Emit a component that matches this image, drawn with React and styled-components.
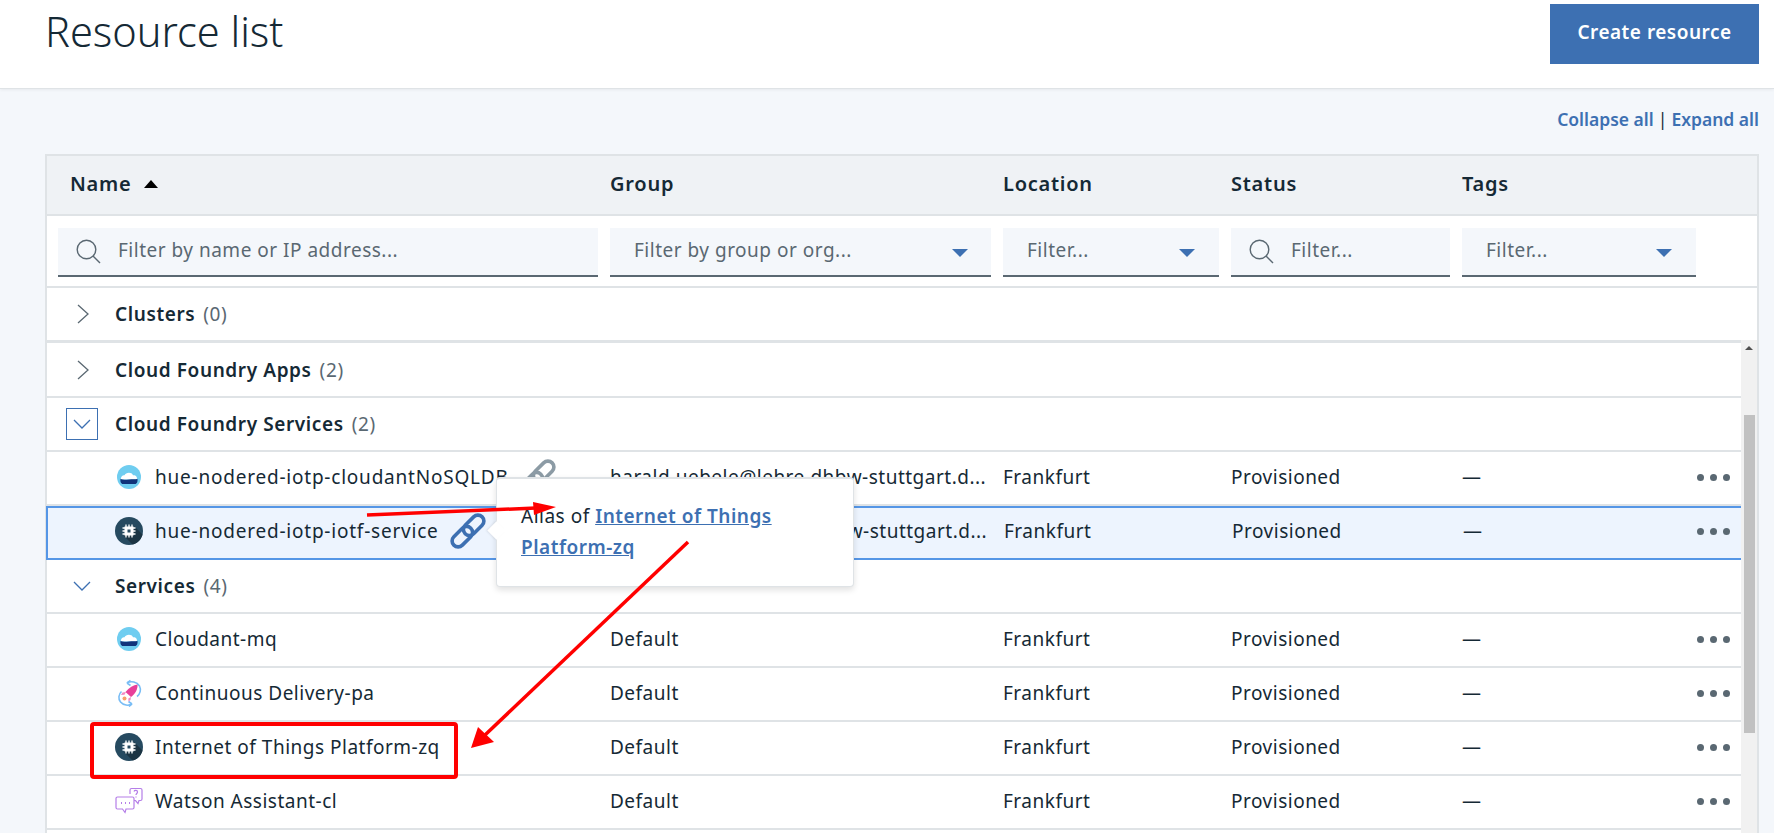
import React from "react";
import styled, { createGlobalStyle } from "styled-components";

const Global = createGlobalStyle`
  html, body { margin: 0; padding: 0; height: 833px; overflow: hidden; background: #f4f7fb; }
  * { box-sizing: border-box; }
  body { font-family: "Noto Sans", "Liberation Sans", sans-serif; color: #152935; }
`;

const FONT_SPACING = "0.5px";
const COLUMNS = "563px 393px 228px 231px 1fr";

const Page = styled.div`
  position: relative;
  height: 833px;
  overflow: hidden;
`;
const TopBar = styled.header`
  height: 89px;
  background: #fff;
  border-bottom: 1px solid #dfe3e6;
  box-shadow: 0 1px 3px rgba(0,0,0,.06);
  display: flex;
  justify-content: space-between;
  align-items: flex-start;
  padding: 4px 15px 0 45px;
`;
const Title = styled.h1`
  margin: 0;
  font-family: "Noto Sans", sans-serif;
  font-weight: 300;
  font-size: 41.5px;
  line-height: 54px;
  letter-spacing: 0;
`;
const PrimaryButton = styled.button`
  width: 209px;
  height: 60px;
  border: 0;
  padding: 0 0 5px;
  background: #3d70b2;
  color: #fff;
  font: 600 19px "Noto Sans", sans-serif;
  letter-spacing: 0.5px;
`;
const Main = styled.main`
  padding: 0 15px 0 45px;
`;
const ExpandLinks = styled.div`
  height: 65px;
  display: flex;
  justify-content: flex-end;
  align-items: center;
  gap: 4px;
  padding-bottom: 6px;
  font-size: 17.5px;
  color: #152935;
`;
const TextLink = styled.a`
  color: #3d70b2;
  font-weight: 600;
`;
const Table = styled.section`
  border: 2px solid #dfe3e6;
  border-bottom: 0;
  background: #fff;
`;
const HeaderRow = styled.div`
  display: grid;
  grid-template-columns: ${COLUMNS};
  height: 60px;
  align-items: center;
  padding-bottom: 3px;
  background: #eff2f5;
  border-bottom: 2px solid #dfe3e6;
  font-size: 20px;
  letter-spacing: 0.75px;
  font-weight: 600;
`;
const HeaderCell = styled.div`
  display: flex;
  align-items: center;
  gap: 13px;
  padding-left: ${p => p.$first ? "23px" : "0"};
`;
const SortCaret = styled.span`
  width: 0;
  height: 0;
  border-left: 7.5px solid transparent;
  border-right: 7.5px solid transparent;
  border-bottom: 8px solid #000;
`;
const FilterRow = styled.div`
  display: grid;
  grid-template-columns: ${COLUMNS};
  height: 72px;
  align-items: start;
  padding-top: 12px;
  border-bottom: 2px solid #dfe3e6;
`;
const FilterCell = styled.div`
  padding-left: ${p => p.$first ? "11px" : "0"};
  padding-right: ${p => p.$pad}px;
`;
const FilterBox = styled.div`
  height: 49px;
  background: #f4f7fb;
  border-bottom: 2px solid #5a6872;
  display: flex;
  align-items: center;
  justify-content: space-between;
  padding: 0 ${p => p.$caret ? "24px" : "0"} 3px;
  color: #5a6872;
  font-size: 19px;
  letter-spacing: ${FONT_SPACING};
  white-space: nowrap;
`;
const SearchGroup = styled.div`
  display: flex;
  align-items: center;
  gap: 17px;
  padding-left: 18px;
`;
const SearchSvg = styled.svg`
  flex: none;
  margin-top: 3px;
`;
const Caret = styled.span`
  width: 0;
  height: 0;
  border-left: 8px solid transparent;
  border-right: 8px solid transparent;
  border-top: 8px solid #3d70b2;
  margin-top: 5px;
  margin-right: ${p => p.$shift || 0}px;
`;
const Row = styled.div`
  position: relative;
  display: grid;
  grid-template-columns: ${COLUMNS};
  align-items: center;
  height: 54px;
  border-bottom: 2px solid #dfe3e6;
  font-size: 19px;
  letter-spacing: ${FONT_SPACING};
  white-space: nowrap;
`;
const ItemRow = styled(Row)`
  padding-bottom: 2px;
  ${p => p.$selected && `
    padding-bottom: 4px;
    background: #edf4fe;
    border-top: 2px solid #5596e6;
    border-bottom: 2px solid #5596e6;
    border-left: 2px solid #5596e6;
    margin-left: -1px;
  `}
`;
const StickyRow = styled(Row)`
  height: 55px;
  border-bottom-width: 3px;
`;
const SectionName = styled.div`
  display: flex;
  align-items: center;
  gap: 17px;
  padding-left: 19px;
  grid-column: 1 / -1;
  font-weight: 600;
  letter-spacing: 0.6px;
`;
const Count = styled.span`
  color: #5a6872;
  font-weight: 400;
  margin-left: -9px;
`;
const Toggle = styled.span`
  width: 32px;
  height: 32px;
  display: flex;
  align-items: center;
  justify-content: center;
  border: 1px solid ${p => p.$boxed ? "#3d70b2" : "transparent"};
`;
const NameCell = styled.div`
  display: flex;
  align-items: center;
  gap: 12px;
  padding-left: ${p => p.$shift ? 67 : 68}px;
`;
const RowText = styled.span`
  letter-spacing: ${p => p.$wide ? "0.78px" : "inherit"};
`;
const LinkIconSlot = styled.span`
  display: flex;
  margin-left: -1px;
`;
const Cell = styled.div`
  overflow: hidden;
`;
const TagCell = styled.div`
  display: flex;
  align-items: center;
  justify-content: space-between;
  padding-right: 11px;
`;
const Dots = styled.div`
  display: flex;
  gap: 6px;
`;
const Dot = styled.span`
  width: 7px;
  height: 7px;
  border-radius: 50%;
  background: #5a6872;
`;
const ScrollArea = styled.div`
  display: flex;
  margin-top: -3px;
`;
const Rows = styled.div`
  flex: 1;
  min-width: 0;
  padding-top: 4px;
`;
const ScrollTrack = styled.div`
  position: relative;
  z-index: 1;
  width: 16px;
  height: 500px;
  background: #f1f1f1;
  padding: 75px 2px 0 3px;
`;
const ScrollUp = styled.span`
  position: absolute;
  top: 6px;
  left: 4px;
  width: 0;
  height: 0;
  border-left: 4px solid transparent;
  border-right: 4px solid transparent;
  border-bottom: 4px solid #505050;
`;
const ScrollThumb = styled.div`
  height: 318px;
  background: #c1c1c1;
`;
const Tooltip = styled.div`
  position: absolute;
  z-index: 2;
  left: 448px;
  top: -31px;
  width: 358px;
  height: 110px;
  padding: 22px 24px;
  background: #fff;
  border: 1px solid #dfe3e6;
  border-top-width: 2px;
  border-radius: 4px;
  box-shadow: 0 3px 6px rgba(0,0,0,.12);
  line-height: 31px;
  white-space: normal;
  &::before {
    content: "";
    position: absolute;
    left: -7px;
    top: 45px;
    width: 13px;
    height: 13px;
    background: #fff;
    transform: rotate(45deg);
    box-shadow: -1px 1px 2px rgba(0,0,0,.08);
  }
`;
const TooltipLink = styled.a`
  color: #3d70b2;
  font-weight: 600;
  text-decoration: underline;
`;
const Annotations = styled.svg`
  position: absolute;
  left: 0;
  top: 0;
  z-index: 5;
  pointer-events: none;
`;

const Chevron = ({ down }) => (
  <svg width="20" height="20" viewBox="0 0 20 20" fill="none" stroke={down ? "#3d70b2" : "#5a6872"} strokeWidth="1.3">
    {down ? <path d="M2 6l8 8 8-8" /> : <path d="M6 1l10 9-10 9" />}
  </svg>
);
const SearchIcon = () => (
  <SearchSvg width="25" height="25" viewBox="0 0 25 25" fill="none" stroke="#5a6872" strokeWidth="1.4">
    <circle cx="10.5" cy="10.5" r="9.3" />
    <path d="M17 17l7 7" />
  </SearchSvg>
);
const LinkIcon = ({ color }) => (
  <svg width="36" height="36" viewBox="0 0 36 36" fill="none" stroke={color} strokeWidth="3.6">
    <g transform="rotate(-45 18 18)">
      <rect x="-2" y="12" width="24" height="12" rx="6" />
      <rect x="14" y="12" width="24" height="12" rx="6" />
    </g>
  </svg>
);
const IotIcon = () => (
  <svg width="28" height="28" viewBox="0 0 28 28">
    <defs><clipPath id="iotc"><circle cx="14" cy="14" r="14" /></clipPath></defs>
    <circle cx="14" cy="14" r="14" fill="#264a60" />
    <path d="M9 19l10-10 10 10v10H19z" fill="#1b3443" clipPath="url(#iotc)" />
    <rect x="9.500" y="9.500" width="9" height="9" fill="#fff" />
    <path d="M11 7.500v13M14 7.500v13M17 7.500v13M7.500 11h13M7.500 14h13M7.500 17h13" stroke="#fff" strokeWidth="1.300" />
    <rect x="12.500" y="12.500" width="3" height="3" fill="#264a60" />
  </svg>
);
const CloudantIcon = () => (
  <svg width="28" height="28" viewBox="0 0 28 28">
    <circle cx="14" cy="14" r="12" fill="#6fcdf0" />
    <path d="M6 16.500c-.5-3 2-4.500 3.500-4.300 1-2.700 7-3.700 8.500 0 2.500-.5 4.700 1.800 3.800 4.300z" fill="#fff" />
    <path d="M5.500 16c3 1.200 5 .8 8.500.4s5.500 0 8.500-.4c.3 2.500-.5 5-2.500 5H8c-2 0-3-2.500-2.500-5z" fill="#10337a" />
  </svg>
);
const DeliveryIcon = () => (
  <svg width="28" height="28" viewBox="0 0 28 28" fill="none" stroke="#79bdf5" strokeWidth="1.6">
    <path d="M12 4c4-2.500 10-1 12.500 3 1.800 3.500.8 8-2.500 10.500" />
    <path d="M12 4l3.500-2.500M12 4l3.500 2.500" />
    <path d="M6.500 12.500c-3 2.500-3.500 7.500-1 10.500 3 3.500 8 4 11.500 2" />
    <path d="M17 25l-3.500-2.500M17 25l-3 2.500" />
    <path d="M22.500 5.500c.4 4.500-2 9-6.500 12.500l-5.500-5C14 8.500 18.500 6 22.500 5.500z" fill="#e8409a" stroke="none" />
    <path d="M11 13l-3.500.5-1.500 2.500 3.500-.2zM16 18l-.5 3-2 1.500-.2-3z" fill="#f48ac4" stroke="none" />
    <circle cx="9.500" cy="19.500" r="2" fill="#f7a06b" stroke="none" />
  </svg>
);
const AssistantIcon = () => (
  <svg width="28" height="28" viewBox="0 0 28 28" fill="none" stroke="#b57ee8" strokeWidth="1.200">
    <path d="M2.500 10h15a1.500 1.500 0 0 1 1.500 1.500v9a1.500 1.500 0 0 1-1.500 1.500H11l-1 3.500-2.500-3.500h-5A1.500 1.500 0 0 1 1 20.500v-9A1.500 1.500 0 0 1 2.500 10z" />
    <path d="M15 7V3a1.500 1.500 0 0 1 1.500-1.500h9A1.500 1.500 0 0 1 27 3v9a1.500 1.500 0 0 1-1.500 1.500H24l-1 3-2.500-3H19" />
    <path d="M19 4.500c.5-1.500 3.500-1.500 3.500 .5 0 1.500-1.500 1.500-1.500 3M21 9.500v1" />
    <path d="M6 16h1M10 16h1M14 16h1" strokeWidth="1.800" />
  </svg>
);

const RowActions = () => (
  <TagCell>
    <span>—</span>
    <Dots><Dot /><Dot /><Dot /></Dots>
  </TagCell>
);

const ResourceRow = ({ icon, name, group, link, selected, children }) => (
  <ItemRow $selected={selected}>
    <NameCell $shift={selected}>
      {icon}
      <RowText $wide={!!link}>{name}</RowText>
      {link && <LinkIconSlot><LinkIcon color={link} /></LinkIconSlot>}
    </NameCell>
    <Cell>{group}</Cell>
    <div>Frankfurt</div>
    <div>Provisioned</div>
    <RowActions />
    {children}
  </ItemRow>
);

const Section = ({ name, count, down, boxed }) => (
  <Row>
    <SectionName>
      <Toggle $boxed={boxed}><Chevron down={down} /></Toggle>
      <span>{name}</span>
      <Count>({count})</Count>
    </SectionName>
  </Row>
);

const EMAIL = "harald.uebele@lehre.dhbw-stuttgart.d...";

export default function App() {
  return (
    <Page>
      <Global />
      <TopBar>
        <Title>Resource list</Title>
        <PrimaryButton>Create resource</PrimaryButton>
      </TopBar>
      <Main>
        <ExpandLinks>
          <TextLink>Collapse all</TextLink>
          <span>|</span>
          <TextLink>Expand all</TextLink>
        </ExpandLinks>
        <Table>
          <HeaderRow>
            <HeaderCell $first>Name <SortCaret /></HeaderCell>
            <HeaderCell>Group</HeaderCell>
            <HeaderCell>Location</HeaderCell>
            <HeaderCell>Status</HeaderCell>
            <HeaderCell>Tags</HeaderCell>
          </HeaderRow>
          <FilterRow>
            <FilterCell $first $pad={12}>
              <FilterBox><SearchGroup><SearchIcon />Filter by name or IP address...</SearchGroup></FilterBox>
            </FilterCell>
            <FilterCell $pad={12}><FilterBox $caret>Filter by group or org...<Caret $shift={-1} /></FilterBox></FilterCell>
            <FilterCell $pad={12}><FilterBox $caret>Filter...<Caret /></FilterBox></FilterCell>
            <FilterCell $pad={12}><FilterBox><SearchGroup>
              <SearchIcon />Filter...</SearchGroup></FilterBox></FilterCell>
            <FilterCell $pad={61}><FilterBox $caret>Filter...<Caret /></FilterBox></FilterCell>
          </FilterRow>
          <StickyRow>
            <SectionName>
              <Toggle><Chevron /></Toggle>
              <span>Clusters</span>
              <Count>(0)</Count>
            </SectionName>
          </StickyRow>
          <ScrollArea>
            <Rows>
              <Section name="Cloud Foundry Apps" count={2} />
              <Section name="Cloud Foundry Services" count={2} down boxed />
              <ResourceRow icon={<CloudantIcon />} name="hue-nodered-iotp-cloudantNoSQLDB" group={EMAIL} link="#8c9ba5" />
              <ResourceRow selected icon={<IotIcon />} name="hue-nodered-iotp-iotf-service" group={EMAIL} link="#3d70b2">
                <Tooltip>
                  Alias of <TooltipLink>Internet of Things Platform-zq</TooltipLink>
                </Tooltip>
              </ResourceRow>
              <Section name="Services" count={4} down />
              <ResourceRow icon={<CloudantIcon />} name="Cloudant-mq" group="Default" />
              <ResourceRow icon={<DeliveryIcon />} name="Continuous Delivery-pa" group="Default" />
              <ResourceRow icon={<IotIcon />} name="Internet of Things Platform-zq" group="Default" />
              <ResourceRow icon={<AssistantIcon />} name="Watson Assistant-cl" group="Default" />
            </Rows>
            <ScrollTrack>
              <ScrollUp />
              <ScrollThumb />
            </ScrollTrack>
          </ScrollArea>
        </Table>
      </Main>
      <Annotations width="1774" height="833" viewBox="0 0 1774 833">
        <path d="M367 515L536 508" stroke="#ff0000" strokeWidth="3.500" />
        <path d="M556 507L533 502L534 515z" fill="#ff0000" />
        <path d="M688 542L485 735" stroke="#ff0000" strokeWidth="3.500" />
        <path d="M471 748L478 727L494 742z" fill="#ff0000" />
        <rect x="92" y="724" width="364" height="53" rx="2" fill="none" stroke="#ff0000" strokeWidth="4" />
      </Annotations>
    </Page>
  );
}
